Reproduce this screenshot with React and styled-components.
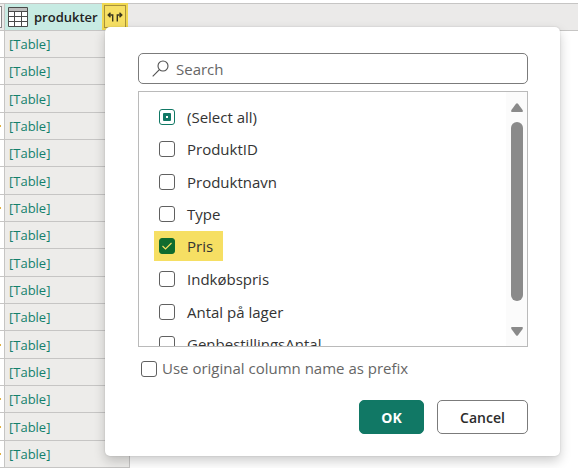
import React, { useState } from "react";
import styled, { createGlobalStyle, css } from "styled-components";

const GlobalStyle = createGlobalStyle`
  *, *::before, *::after { box-sizing: border-box; }
  html, body { margin: 0; background: #fff; }
  html, body { overflow: hidden; }
  body, button { font-family: "Open Sans", "Noto Sans", sans-serif; font-size: 14px; }
`;

const Page = styled.main`
  position: relative;
  padding-top: 3px;
`;

const HeaderBand = styled.div`
  display: flex;
  height: 28px;
  background: #ebeae9;
  border-top: 1px solid #c6c5c4;
  border-bottom: 1px solid #c6c5c4;
`;

const PreviousHeader = styled.div`
  flex: none;
  display: flex;
  align-items: center;
  width: 5px;
  border-right: 1px solid #c6c5c4;
`;

const FilterEdge = styled.span`
  width: 2px;
  height: 22px;
  background: #fff;
  border: 1px solid #8a8a8a;
  border-left: 0;
`;

const ColumnHeader = styled.div`
  display: flex;
  align-items: center;
  width: 97px;
  padding-left: 3px;
  gap: 6px;
  background: #c7ebe3;
  color: #222;
  font-size: 13px;
  font-weight: 600;
`;

const ExpandButton = styled.button`
  display: grid;
  place-items: center;
  width: 26px;
  height: 27px;
  margin-top: -1px;
  padding: 0;
  border: 2px solid #f0d850;
  background: #f6df63;
  box-shadow: inset 0 0 0 1px #a8923a;
`;

const Grid = styled.table`
  border-collapse: separate;
  border-spacing: 0;
  table-layout: fixed;
  width: 130px;
`;

const GridRow = styled.tr`
  height: 27px;
  &:nth-child(3n) { height: 28px; }
`;

const EdgeCell = styled.td`
  width: 5px;
  padding: 0;
  border-right: 1px solid #c6c5c4;
  border-bottom: 1px solid #c6c5c4;
  background: #fff;
`;

const Mark = styled.span`
  display: block;
  width: 1px;
  height: 2px;
  background: #e0b040;
`;

const TableCell = styled.td`
  padding: 0 4px;
  border-right: 1px solid #c6c5c4;
  border-bottom: 1px solid #c6c5c4;
  background: #edecea;
  line-height: 20px;
`;

const TableLink = styled.a`
  color: #13806c;
  font-size: 13px;
  text-decoration: none;
`;

const Panel = styled.form`
  position: absolute;
  top: 27px;
  left: 105px;
  right: 18px;
  display: flex;
  flex-direction: column;
  padding: 26px 32px 22px 33px;
  border-radius: 5px;
  background: #fff;
  box-shadow: 0 5px 12px rgba(0, 0, 0, 0.2), 0 0 2px rgba(0, 0, 0, 0.14);
  font-size: 15px;
`;

const SearchBox = styled.label`
  display: flex;
  align-items: center;
  gap: 7px;
  height: 31px;
  padding: 0 13px;
  border: 1px solid #7b7b7b;
  border-radius: 5px;
  background: #fff;
`;

const SearchInput = styled.input`
  flex: 1;
  min-width: 0;
  padding: 0;
  border: 0;
  outline: 0;
  background: transparent;
  color: #333;
  font: inherit;
  &::placeholder { color: #666; opacity: 1; }
`;

const ListFrame = styled.div`
  display: flex;
  height: 256px;
  margin-top: 7px;
  border: 1px solid #bababa;
`;

const OptionList = styled.div`
  flex: 1;
  display: flex;
  flex-direction: column;
  align-items: flex-start;
  padding: 8px 15px;
  overflow-y: auto;
  scrollbar-width: none;
`;

const Option = styled.label`
  flex: none;
  display: flex;
  align-items: center;
  gap: 12px;
  height: 32px;
  padding: 0 10px 0 5px;
  color: #333;
  line-height: 20px;
  &:nth-child(odd) { height: 33px; }
  ${(p) => p.$marked && css`
    && { height: 30px; }
    margin: 1px 0 2px;
    background: #f6df63;
  `}
`;

const BoxWrap = styled.span`
  flex: none;
  display: grid;
  width: 16px;
  height: 16px;
  > * { grid-area: 1 / 1; }
`;

const BoxInput = styled.input`
  appearance: none;
  width: 16px;
  height: 16px;
  margin: 0;
  border: 1px solid #606060;
  border-radius: 3px;
  background: #fff;
  &:indeterminate { border-color: #117865; }
  &:checked { border-color: #0f6b2e; background: #0f6b2e; }
`;

const BoxGlyph = styled.svg`
  width: 16px;
  height: 16px;
  pointer-events: none;
`;

const Scrollbar = styled.div`
  flex: none;
  display: flex;
  flex-direction: column;
  align-items: center;
  justify-content: space-between;
  width: 21px;
  padding: 11px 0 10px;
  background: #fbfbfb;
`;

const ScrollArrow = styled.svg`
  flex: none;
  width: 12px;
  height: 9px;
  fill: #8a8a8a;
`;

const ScrollTrack = styled.div`
  flex: 1;
  width: 12px;
  padding: 10px 0 26px;
`;

const ScrollThumb = styled.div`
  height: 100%;
  border-radius: 6px;
  background: #8a8a8a;
`;

const PrefixOption = styled.label`
  display: flex;
  align-items: center;
  gap: 5px;
  margin-top: 10px;
  padding-left: 3px;
  color: #666;
  line-height: 22px;
  ${BoxWrap} { margin-top: 2px; }
`;

const Actions = styled.div`
  display: flex;
  justify-content: flex-end;
  gap: 13px;
  margin-top: 21px;
`;

const ActionButton = styled.button`
  width: ${(p) => (p.$primary ? "65px" : "91px")};
  height: 34px;
  padding: 0;
  border: 1px solid ${(p) => (p.$primary ? "#117865" : "#7b7b7b")};
  border-radius: 5px;
  background: ${(p) => (p.$primary ? "#117865" : "#fff")};
  color: ${(p) => (p.$primary ? "#fff" : "#2b2b2b")};
  font-weight: ${(p) => (p.$primary ? 700 : 600)};
`;

function CheckBox({ checked, mixed, onChange }) {
  return (
    <BoxWrap>
      <BoxInput
        type="checkbox"
        checked={checked}
        onChange={onChange}
        ref={(el) => { if (el) el.indeterminate = Boolean(mixed); }}
      />
      {checked && (
        <BoxGlyph viewBox="0 0 16 16" aria-hidden="true">
          <path d="M3.5 8l3 3 6-6" fill="none" stroke="#f6df63" strokeWidth="1.2" />
        </BoxGlyph>
      )}
      {mixed && (
        <BoxGlyph viewBox="0 0 16 16" aria-hidden="true">
          <rect x="4" y="4" width="8" height="8" rx="1" fill="#117865" />
          <rect x="7" y="7" width="2" height="2" fill="#fff" />
        </BoxGlyph>
      )}
    </BoxWrap>
  );
}

const columns = ["ProduktID", "Produktnavn", "Type", "Pris", "Indkøbspris", "Antal på lager", "GenbestillingsAntal"];
const markedRows = [3, 6, 11, 13, 14, 15];

export default function App() {
  const [selected, setSelected] = useState(["Pris"]);
  const [prefix, setPrefix] = useState(false);
  const all = selected.length === columns.length;
  const toggle = (name) =>
    setSelected((s) => (s.includes(name) ? s.filter((n) => n !== name) : [...s, name]));

  return (
    <Page>
      <GlobalStyle />
      <HeaderBand>
        <PreviousHeader><FilterEdge /></PreviousHeader>
        <ColumnHeader>
          <svg width="20" height="20" viewBox="0 0 20 20" aria-hidden="true">
            <path d="M.5.5h19v19H.5z" fill="#fff" />
            <path d="M1 1h18v3H1z" fill="#bdbdbd" />
            <path d="M.5.5h19v19H.5zM.5 4.5h19M.5 9.5h19M.5 14.5h19M6.5 4.5v15M13.5 4.5v15" fill="none" stroke="#4a4a4a" />
          </svg>
          produkter
        </ColumnHeader>
        <ExpandButton type="button" aria-label="Expand column">
          <svg width="16" height="10" viewBox="0 0 16 10" fill="none" stroke="#3a3620" strokeWidth="1.4" aria-hidden="true">
            <path d="M5.7 9.5V3H1.2M3.5.7L1.2 3l2.3 2.3M10.3 9.5V3h4.5M12.5.7L14.8 3l-2.3 2.3" />
          </svg>
        </ExpandButton>
      </HeaderBand>
      <Grid>
        <tbody>
          {Array.from({ length: 16 }, (_, i) => (
            <GridRow key={i}>
              <EdgeCell>{markedRows.includes(i) && <Mark />}</EdgeCell>
              <TableCell><TableLink href="#table">[Table]</TableLink></TableCell>
            </GridRow>
          ))}
        </tbody>
      </Grid>
      <Panel onSubmit={(e) => e.preventDefault()}>
        <SearchBox>
          <svg width="17" height="17" viewBox="0 0 17 17" fill="none" stroke="#505050" strokeWidth="1.1" aria-hidden="true">
            <circle cx="11" cy="6" r="5" />
            <path d="M7.4 9.6L.7 16.3" />
          </svg>
          <SearchInput type="text" placeholder="Search" aria-label="Search" />
        </SearchBox>
        <ListFrame>
          <OptionList>
            <Option>
              <CheckBox
                checked={all}
                mixed={selected.length > 0 && !all}
                onChange={() => setSelected(all ? [] : columns)}
              />
              (Select all)
            </Option>
            {columns.map((name) => (
              <Option key={name} $marked={name === "Pris"}>
                <CheckBox checked={selected.includes(name)} onChange={() => toggle(name)} />
                {name}
              </Option>
            ))}
          </OptionList>
          <Scrollbar aria-hidden="true">
            <ScrollArrow viewBox="0 0 12 9"><path d="M5 .8Q6-.4 7 .8L11.6 7Q12.4 9 11 9H1Q-.4 9 .4 7z" /></ScrollArrow>
            <ScrollTrack><ScrollThumb /></ScrollTrack>
            <ScrollArrow viewBox="0 0 12 9"><path d="M5 8.2Q6 9.4 7 8.2L11.6 2Q12.4 0 11 0H1Q-.4 0 .4 2z" /></ScrollArrow>
          </Scrollbar>
        </ListFrame>
        <PrefixOption>
          <CheckBox checked={prefix} onChange={() => setPrefix(!prefix)} />
          Use original column name as prefix
        </PrefixOption>
        <Actions>
          <ActionButton type="submit" $primary>OK</ActionButton>
          <ActionButton type="button">Cancel</ActionButton>
        </Actions>
      </Panel>
    </Page>
  );
}
